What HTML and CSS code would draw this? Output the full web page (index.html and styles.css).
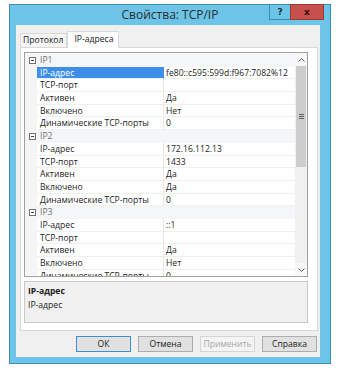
FILE: index.html
```html
<!DOCTYPE html>
<html lang="ru">
<head>
    <meta charset="UTF-8">
    <meta name="viewport" content="width=device-width, initial-scale=1.0">
    <title>Свойства: TCP/IP</title>
    <link rel="stylesheet" href="styles.css">
</head>
<body>
    <div class="window">
        <div class="titlebar">
            <span></span>
            <span class="title">Свойства: TCP/IP</span>
            <div class="ctrls">
                <span class="btn-help">?</span>
                <span class="btn-close">x</span>
            </div>
        </div>
        <div class="client">
            <div class="tabs">
                <div class="tab">Протокол</div>
                <div class="tab active">IP-адреса</div>
            </div>
            <div class="panel">
                <div class="grid">
                    <div class="rows">
                        <div class="row cat"><span class="gutter"><i class="minus"></i></span><span class="cat-name">IP1</span></div>
                        <div class="row selected"><span class="gutter"></span><span class="name">IP-адрес</span><span class="value">fe80::c595:599d:f967:7082%12</span></div>
                        <div class="row"><span class="gutter"></span><span class="name">TCP-порт</span><span class="value"></span></div>
                        <div class="row"><span class="gutter"></span><span class="name">Активен</span><span class="value">Да</span></div>
                        <div class="row"><span class="gutter"></span><span class="name">Включено</span><span class="value">Нет</span></div>
                        <div class="row"><span class="gutter"></span><span class="name">Динамические TCP-порты</span><span class="value">0</span></div>
                        <div class="row cat"><span class="gutter"><i class="minus"></i></span><span class="cat-name">IP2</span></div>
                        <div class="row"><span class="gutter"></span><span class="name">IP-адрес</span><span class="value">172.16.112.13</span></div>
                        <div class="row"><span class="gutter"></span><span class="name">TCP-порт</span><span class="value">1433</span></div>
                        <div class="row"><span class="gutter"></span><span class="name">Активен</span><span class="value">Да</span></div>
                        <div class="row"><span class="gutter"></span><span class="name">Включено</span><span class="value">Да</span></div>
                        <div class="row"><span class="gutter"></span><span class="name">Динамические TCP-порты</span><span class="value">0</span></div>
                        <div class="row cat"><span class="gutter"><i class="minus"></i></span><span class="cat-name">IP3</span></div>
                        <div class="row"><span class="gutter"></span><span class="name">IP-адрес</span><span class="value">::1</span></div>
                        <div class="row"><span class="gutter"></span><span class="name">TCP-порт</span><span class="value"></span></div>
                        <div class="row"><span class="gutter"></span><span class="name">Активен</span><span class="value">Да</span></div>
                        <div class="row"><span class="gutter"></span><span class="name">Включено</span><span class="value">Нет</span></div>
                        <div class="row"><span class="gutter"></span><span class="name">Динамические TCP-порты</span><span class="value">0</span></div>
                    </div>
                    <div class="scrollbar">
                        <div class="arrow">
                            <svg width="7" height="4" viewBox="0 0 7 4"><polyline points="0.5,3.5 3.5,0.5 6.5,3.5" fill="none" stroke="#606060" stroke-width="1"/></svg>
                        </div>
                        <div class="thumb"><i class="grip"></i></div>
                        <div class="track"></div>
                        <div class="arrow">
                            <svg width="7" height="4" viewBox="0 0 7 4"><polyline points="0.5,0.5 3.5,3.5 6.5,0.5" fill="none" stroke="#606060" stroke-width="1"/></svg>
                        </div>
                    </div>
                </div>
                <div class="desc">
                    <div class="desc-title">IP-адрес</div>
                    <div class="desc-text">IP-адрес</div>
                </div>
            </div>
            <div class="buttons">
                <button class="btn default">ОК</button>
                <button class="btn">Отмена</button>
                <button class="btn" disabled>Применить</button>
                <button class="btn">Справка</button>
            </div>
        </div>
    </div>
</body>
</html>
```

FILE: styles.css
```css
html, body {
    margin: 0;
    padding: 0;
    background: #fff;
}
body {
    font-family: 'Open Sans', 'Noto Sans', sans-serif;
    font-size: 8.6px;
    color: #1e1e1e;
}

.window {
    margin: 4px 0 0 9px;
    width: 322px;
    height: 360px;
    box-sizing: border-box;
    border: 1px solid #3b8fb6;
    background: #6cc5e8;
    display: flex;
    flex-direction: column;
}

/* title bar */
.titlebar {
    height: 21px;
    display: grid;
    grid-template-columns: 1fr auto 1fr;
    align-items: start;
}
.title {
    font-size: 12px;
    color: #2b2b2b;
    line-height: 18px;
    padding-top: 1px;
}
.ctrls {
    justify-self: end;
    display: flex;
    margin-top: -1px;
    margin-right: 6px;
}
.btn-help, .btn-close {
    height: 16px;
    line-height: 15px;
    text-align: center;
    font-family: 'DejaVu Sans', sans-serif;
    font-weight: bold;
    font-size: 9px;
    box-sizing: border-box;
}
.btn-help {
    width: 21px;
    border: 1px solid #3b8fb6;
    border-right: none;
    color: #1d2a33;
}
.btn-close {
    width: 34px;
    background: #c7504a;
    border: 1px solid #9c3b36;
    color: #2c0c0a;
}

/* client area */
.client {
    flex: 1;
    margin: 0 10px 6px 6px;
    background: #f0f0f0;
    padding: 6px 2px 5px 4px;
    display: flex;
    flex-direction: column;
}

.tabs {
    display: flex;
    align-items: flex-end;
    height: 16px;
}
.tab {
    height: 14px;
    box-sizing: border-box;
    padding: 0 3px 0 2px;
    border: 1px solid #d9d9d9;
    border-bottom: none;
    background: #f4f4f4;
    line-height: 12px;
    color: #222;
}
.tab.active {
    height: 17px;
    margin-bottom: -1px;
    padding: 0 5px 0 6px;
    background: #fff;
    line-height: 15px;
    position: relative;
    z-index: 1;
}

.panel {
    border: 1px solid #d9d9d9;
    background: #fff;
    padding: 4px 9px 7px 3px;
    display: flex;
    flex-direction: column;
    gap: 4px;
}

/* property grid */
.grid {
    height: 225px;
    box-sizing: border-box;
    border: 1px solid #a0a0a0;
    display: flex;
    overflow: hidden;
}
.rows {
    flex: 1;
    padding-top: 1px;
    overflow: hidden;
}
.row {
    display: grid;
    grid-template-columns: 12px 127px 1fr;
    height: 12.7px;
    line-height: 12px;
}
.row span {
    white-space: nowrap;
    overflow: hidden;
}
.gutter {
    background: #f5f5f5;
    display: flex;
    align-items: center;
    justify-content: center;
}
.name {
    padding-left: 3px;
    border-bottom: 1px solid #f0f0f0;
    border-right: 1px solid #e6e6e6;
}
.value {
    padding-left: 2px;
    border-bottom: 1px solid #f0f0f0;
}
.row.selected .name {
    background: #3d8fea;
    color: #fff;
    border-right-color: #3d8fea;
}
.row.cat {
    background: #f5f6f8;
}
.cat-name {
    grid-column: 2 / 4;
    padding-left: 3px;
    color: #707070;
}
.minus {
    width: 5px;
    height: 5px;
    border: 1px solid #707070;
    background: #fff;
    position: relative;
    margin-left: 2px;
}
.minus::after {
    content: '';
    position: absolute;
    left: 1px;
    right: 1px;
    top: 2px;
    height: 1px;
    background: #404040;
}

.scrollbar {
    width: 12px;
    background: #f0f0f0;
    display: flex;
    flex-direction: column;
}
.arrow {
    height: 13px;
    display: flex;
    align-items: center;
    justify-content: center;
    background: #f7f7f7;
}
.thumb {
    height: 101px;
    margin: 0 1px;
    background: #cdcdcd;
    display: flex;
    align-items: center;
    justify-content: center;
}
.grip {
    width: 5px;
    height: 5px;
    background: linear-gradient(#606060 1px, transparent 1px) 0 0 / 5px 2px;
}
.track {
    flex: 1;
}

/* description */
.desc {
    height: 42px;
    box-sizing: border-box;
    border: 1px solid #c8c8c8;
    background: #f0f0f0;
    padding: 2px 3px;
    line-height: 14px;
}
.desc-title {
    font-weight: bold;
}

/* buttons */
.buttons {
    margin-top: 5px;
    display: flex;
    justify-content: flex-end;
    gap: 7px;
    padding-right: 1px;
}
.btn {
    width: 55px;
    height: 16px;
    padding: 0;
    font-family: inherit;
    font-size: 8.6px;
    color: #1e1e1e;
    background: #e1e1e1;
    border: 1px solid #adadad;
    border-radius: 0;
}
.btn.default {
    border-color: #3c8fd8;
}
.btn:disabled {
    color: #a8a8a8;
    background: #f4f4f4;
    border-color: #d5d5d5;
}
```
